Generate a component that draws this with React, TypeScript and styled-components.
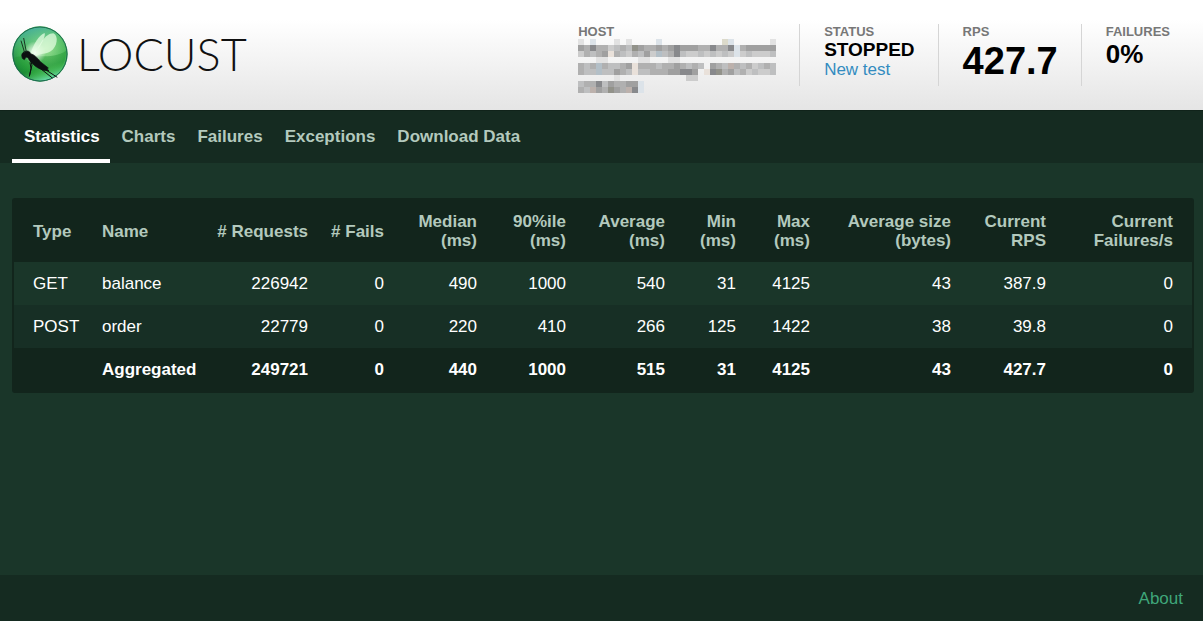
import React from 'react';
import styled, { createGlobalStyle } from 'styled-components';

const GlobalStyle = createGlobalStyle`
  * { box-sizing: border-box; }
  html, body, #root { height: 100%; }
  body {
    margin: 0;
    background: #1a3629;
    color: #fff;
    font: 17px/19px "Liberation Sans", Arial, sans-serif;
  }
`;

const Page = styled.div`
  min-height: 100%;
  display: flex;
  flex-direction: column;
`;

const Header = styled.header`
  display: flex;
  justify-content: space-between;
  align-items: flex-start;
  padding: 24px 10px 24px 12px;
  background: linear-gradient(#fff, #fff 18%, #e5e5e5);
  color: #000;
`;

const Brand = styled.a`
  display: flex;
  align-items: center;
  gap: 9px;
  color: #111;
  text-decoration: none;
`;

const Wordmark = styled.span`
  font-family: Lato, sans-serif;
  font-weight: 300;
  font-size: 45px;
  line-height: 60px;
`;

const Stats = styled.dl`
  display: flex;
  margin: 0;
`;

const Stat = styled.div`
  height: 62px;
  padding: 0 23px 0 24px;
  border-left: 1px solid #d5d5d5;

  &:first-child {
    border-left: none;
  }
`;

const Label = styled.dt`
  font-size: 13px;
  line-height: 15px;
  font-weight: bold;
  color: #777;
`;

const Value = styled.dd<{ $size?: number; $line?: number }>`
  margin: 0;
  font-weight: bold;
  font-size: ${(p) => p.$size ?? 17}px;
  line-height: ${(p) => p.$line ?? 18}px;
`;

const NewTest = styled.a`
  display: block;
  font-weight: normal;
  color: #338cc0;
  text-decoration: none;
`;

const MosaicSvg = styled.svg`
  display: block;
`;

const Nav = styled.nav`
  display: flex;
  height: 53px;
  padding: 0 12px;
  background: #152b21;
  border-top: 1px solid #10231a;
`;

const Tab = styled.a<{ $active?: boolean }>`
  padding: 16px 10px 0 12px;
  font-weight: bold;
  text-decoration: none;
  white-space: nowrap;
  color: ${(p) => (p.$active ? '#fff' : '#b3c9bd')};
  border-bottom: 4px solid ${(p) => (p.$active ? '#fff' : 'transparent')};
`;

const Main = styled.main`
  flex: 1;
  padding: 35px 9px 35px 12px;
`;

const Table = styled.table`
  width: 100%;
  table-layout: fixed;
  border: 2px solid #12251c;
  border-radius: 3px;
  border-collapse: separate;
  border-spacing: 0;
  background: #12251c;
`;

const Col = styled.col<{ $width: number }>`
  width: ${(p) => p.$width}px;
`;

const HeadCell = styled.th<{ $left?: boolean }>`
  padding: 12px 12px 12px 8px;
  text-align: ${(p) => (p.$left ? 'left' : 'right')};
  white-space: pre-line;
  color: #b3c9bd;

  &:first-child { padding-left: 19px; }
  &:last-child { padding-right: 19px; }
`;

const Cell = styled.td<{ $left?: boolean }>`
  padding: 12px 12px 12px 8px;
  text-align: ${(p) => (p.$left ? 'left' : 'right')};

  &:first-child { padding-left: 19px; }
  &:last-child { padding-right: 19px; }
`;

const Row = styled.tr`
  background: #1a3629;

  &:nth-child(even) { background: #172f25; }
`;

const TotalRow = styled.tr`
  font-weight: bold;
`;

const Footer = styled.footer`
  display: flex;
  justify-content: flex-end;
  padding: 14px 20px 13px;
  background: #152b21;
`;

const FooterLink = styled.a`
  color: #3fa67a;
  text-decoration: none;
`;

const columns = [
  { title: 'Type', width: 80 },
  { title: 'Name', width: 113 },
  { title: '# Requests', width: 113 },
  { title: '# Fails', width: 76 },
  { title: 'Median\n(ms)', width: 93 },
  { title: '90%ile\n(ms)', width: 89 },
  { title: 'Average\n(ms)', width: 99 },
  { title: 'Min\n(ms)', width: 71 },
  { title: 'Max\n(ms)', width: 74 },
  { title: 'Average size\n(bytes)', width: 141 },
  { title: 'Current\nRPS', width: 95 },
  { title: 'Current\nFailures/s', width: 134 },
];

const rows = [
  ['GET', 'balance', '226942', '0', '490', '1000', '540', '31', '4125', '43', '387.9', '0'],
  ['POST', 'order', '22779', '0', '220', '410', '266', '125', '1422', '38', '39.8', '0'],
];

const total = ['', 'Aggregated', '249721', '0', '440', '1000', '515', '31', '4125', '43', '427.7', '0'];

const tabs = ['Statistics', 'Charts', 'Failures', 'Exceptions', 'Download Data'];

// Mosaic that hides the host address: one letter per 6px block.
const mosaic = [
  'f.v...f.f....v..........yv......f',
  'bcaccedcdgbccbcbabbbccaccavcbbbbb',
  'ecdcbwcdecdbeudcadeedededevedeeed',
  '...ff.....ff...ff................',
  'cdcucddcbwcccdccbcdcd.bcdpcdcedcd',
  'cdduddbcdwddcccbbaab.wagcbdcedeed',
  '......f...........ee.............',
  'dccadbccbbv......................',
  'cdpbcgbcpav......................',
];

const shades: Record<string, string> = {
  a: '#88898c',
  b: '#a0a0a0',
  c: '#b0b0b0',
  d: '#bebfc0',
  e: '#cccccc',
  f: '#e2e2e2',
  g: '#92928a',
  p: '#bcb1ac',
  u: '#b3bfc7',
  v: '#dce3e9',
  w: '#e9e1da',
  y: '#dcdacb',
};

function HostMosaic() {
  return (
    <MosaicSvg width="198" height="54" viewBox="0 0 198 54" shapeRendering="crispEdges" aria-hidden="true">
      {mosaic.flatMap((line, y) =>
        [...line].map((shade, x) =>
          shade === '.' ? null : (
            <rect key={`${x}-${y}`} x={x * 6} y={y * 6} width="6" height="6" fill={shades[shade]} />
          ),
        ),
      )}
    </MosaicSvg>
  );
}

function LocustLogo() {
  return (
    <svg width="56" height="56" viewBox="6 6 168 168" aria-hidden="true">
      <defs>
        <radialGradient id="orb" cx="0.6" cy="0.4" r="0.64">
          <stop offset="0" stopColor="#a4e39a" />
          <stop offset="0.4" stopColor="#62c46c" />
          <stop offset="0.78" stopColor="#2fa545" />
          <stop offset="1" stopColor="#1c8040" />
        </radialGradient>
        <linearGradient id="sky" x1="0.3" y1="0" x2="0.6" y2="1">
          <stop offset="0" stopColor="#48aeb0" stopOpacity="0.85" />
          <stop offset="0.35" stopColor="#6fcf9b" stopOpacity="0.2" />
          <stop offset="0.75" stopColor="#5fd050" stopOpacity="0" />
          <stop offset="1" stopColor="#7df0cc" stopOpacity="0.85" />
        </linearGradient>
        <radialGradient id="glow">
          <stop offset="0" stopColor="#fff" stopOpacity="1" />
          <stop offset="1" stopColor="#fff" stopOpacity="0" />
        </radialGradient>
      </defs>
      <circle cx="90" cy="90" r="83" fill="url(#orb)" />
      <path d="M10 102C45 86 120 112 168 80C169 128 133 170 90 170C48 170 14 140 10 102Z" fill="#0f8a26" opacity="0.38" />
      <circle cx="90" cy="90" r="81" fill="url(#sky)" stroke="#1b6a50" strokeWidth="3" />
      <circle cx="74" cy="86" r="34" fill="url(#glow)" />
      <path d="M61 92C68 63 88 32 104 27C108 42 87 73 67 96Z" fill="#e9ffe6" opacity="0.72" />
      <path d="M75 98C83 67 105 28 130 28C147 35 142 70 122 82C107 91 91 88 75 98Z" fill="#e9ffe6" opacity="0.7" />
      <path
        d="M46 82C53 79 60 83 62 89C72 92 83 101 91 113L115 132L111 135L117 140L100 139C89 134 77 130 68 119C61 113 56 107 55 102L48 99L43 107L37 103L35 94C36 87 40 84 46 82Z"
        fill="#0c1010"
        stroke="#0c1010"
        strokeWidth="2"
        strokeLinejoin="round"
      />
      <path d="M44 86L33 50M49 84L41 42" fill="none" stroke="#193522" strokeWidth="3" />
      <path
        d="M61 107L66 123L58 157L63 134L60 115M87 130L127 162M97 131L142 160"
        fill="none"
        stroke="#0c1010"
        strokeWidth="3"
      />
    </svg>
  );
}

export default function App() {
  return (
    <>
      <GlobalStyle />
      <Page>
        <Header>
          <Brand href="#">
            <LocustLogo />
            <Wordmark>LOCUST</Wordmark>
          </Brand>
          <Stats>
            <Stat>
              <Label>HOST</Label>
              <Value><HostMosaic /></Value>
            </Stat>
            <Stat>
              <Label>STATUS</Label>
              <Value $size={19} $line={22}>STOPPED</Value>
              <Value><NewTest href="#">New test</NewTest></Value>
            </Stat>
            <Stat>
              <Label>RPS</Label>
              <Value $size={38} $line={44}>427.7</Value>
            </Stat>
            <Stat>
              <Label>FAILURES</Label>
              <Value $size={26} $line={30}>0%</Value>
            </Stat>
          </Stats>
        </Header>
        <Nav>
          {tabs.map((name, i) => (
            <Tab key={name} href="#" $active={i === 0}>{name}</Tab>
          ))}
        </Nav>
        <Main>
          <Table>
            <colgroup>
              {columns.map((c) => <Col key={c.title} $width={c.width} />)}
            </colgroup>
            <thead>
              <tr>
                {columns.map((c, i) => (
                  <HeadCell key={c.title} scope="col" $left={i < 2}>{c.title}</HeadCell>
                ))}
              </tr>
            </thead>
            <tbody>
              {rows.map((r) => (
                <Row key={r[1]}>
                  {r.map((v, i) => <Cell key={i} $left={i < 2}>{v}</Cell>)}
                </Row>
              ))}
            </tbody>
            <tfoot>
              <TotalRow>
                {total.map((v, i) => <Cell key={i} $left={i < 2}>{v}</Cell>)}
              </TotalRow>
            </tfoot>
          </Table>
        </Main>
        <Footer>
          <FooterLink href="#">About</FooterLink>
        </Footer>
      </Page>
    </>
  );
}
